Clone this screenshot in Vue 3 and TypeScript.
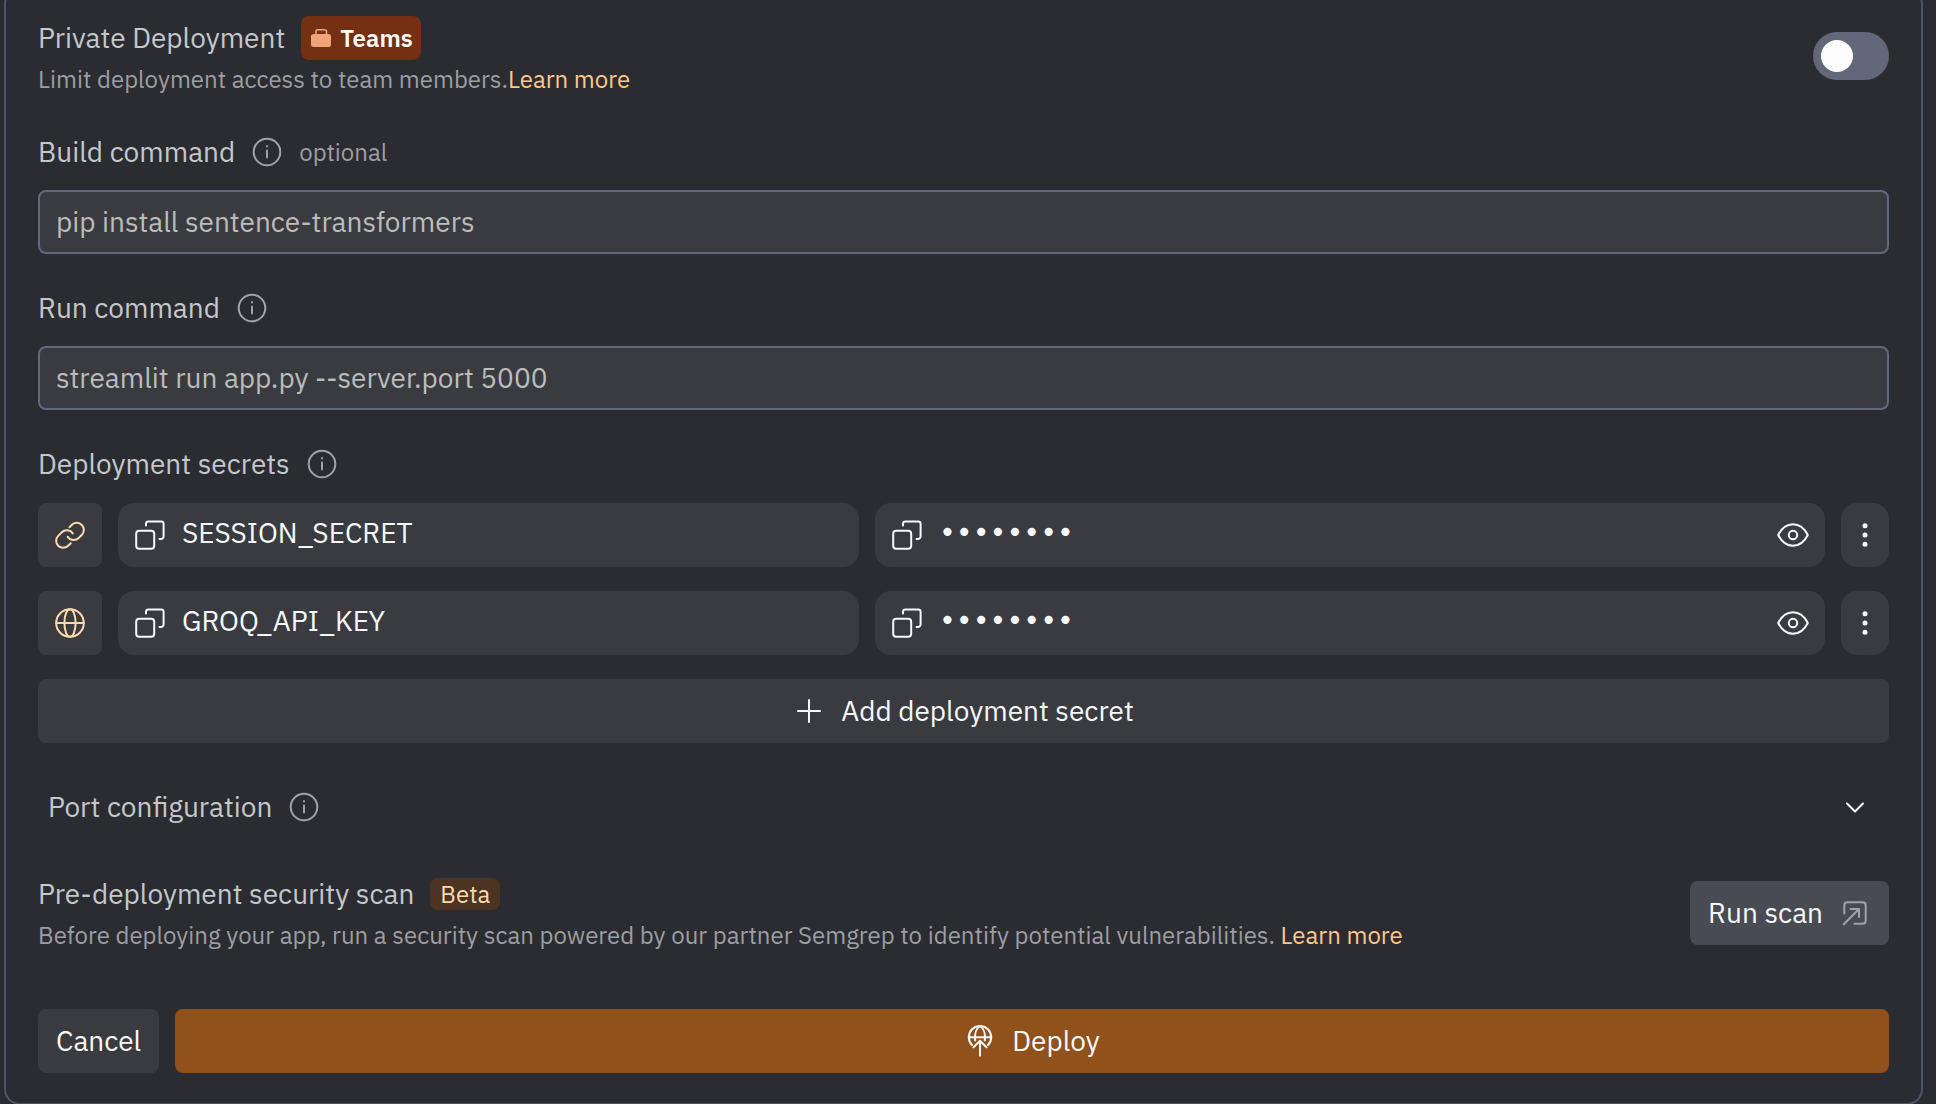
<script setup lang="ts">
import { ref } from 'vue'

interface Secret {
  name: string
  scope: 'linked' | 'global'
}

const privateDeployment = ref(false)
const buildCommand = ref('pip install sentence-transformers')
const runCommand = ref('streamlit run app.py --server.port 5000')
const secrets: Secret[] = [
  { name: 'SESSION_SECRET', scope: 'linked' },
  { name: 'GROQ_API_KEY', scope: 'global' },
]
</script>

<template>
  <main class="page">
    <form class="card" @submit.prevent>
      <section class="row private">
        <div class="about">
          <div class="title">
            <label for="private">Private Deployment</label>
            <span class="badge teams">
              <svg class="icon-bag" viewBox="0 0 20 24" aria-hidden="true">
                <path d="M5 9V5.800a2 2 0 0 1 2-2h6.500a2 2 0 0 1 2 2V9" fill="none" stroke="currentColor" stroke-width="1.600" />
                <rect x="0" y="8" width="20" height="13" rx="2.500" fill="currentColor" />
              </svg>
              Teams
            </span>
          </div>
          <p class="hint">Limit deployment access to team members.<a href="#">Learn more</a></p>
        </div>
        <input id="private" v-model="privateDeployment" class="switch" type="checkbox" role="switch" />
      </section>

      <section class="field">
        <div class="label-row">
          <label for="build">Build command</label>
          <svg class="info" viewBox="0 0 32 32" aria-hidden="true">
            <circle cx="16" cy="16" r="13.300" />
            <path d="M16 14.500v7M16 10v.6" />
          </svg>
          <span class="optional">optional</span>
        </div>
        <input id="build" v-model="buildCommand" class="text-input" type="text" />
      </section>

      <section class="field">
        <div class="label-row">
          <label for="run">Run command</label>
          <svg class="info" viewBox="0 0 32 32" aria-hidden="true">
            <circle cx="16" cy="16" r="13.300" />
            <path d="M16 14.500v7M16 10v.6" />
          </svg>
        </div>
        <input id="run" v-model="runCommand" class="text-input" type="text" />
      </section>

      <section class="field">
        <div class="label-row">
          <h2>Deployment secrets</h2>
          <svg class="info" viewBox="0 0 32 32" aria-hidden="true">
            <circle cx="16" cy="16" r="13.300" />
            <path d="M16 14.500v7M16 10v.6" />
          </svg>
        </div>
        <div class="secrets">
          <div v-for="secret in secrets" :key="secret.name" class="secret">
            <span class="scope">
              <svg v-if="secret.scope === 'linked'" class="icon" viewBox="0 0 32 32" aria-hidden="true">
                <path d="M15.500 8.200l2.700-2.700a7.100 7.100 0 0 1 10 10l-3.500 3.500a7.100 7.100 0 0 1-11-1.100" />
                <path d="M16.800 24.200l-2.700 2.600a7 7 0 0 1-9.900-9.900l3.600-3.600a7.100 7.100 0 0 1 11 1.100" />
              </svg>
              <svg v-else class="icon" viewBox="0 0 32 32" aria-hidden="true">
                <circle cx="16" cy="16" r="13.800" />
                <ellipse cx="16" cy="16" rx="5.600" ry="13.800" />
                <path d="M2.200 16h27.600" />
              </svg>
            </span>
            <div class="cell">
              <button type="button" class="plain" aria-label="Copy name">
                <svg class="icon" viewBox="0 0 32 32" aria-hidden="true">
                  <rect x="2.200" y="11.800" width="18" height="18" rx="3" />
                  <path d="M12 6.500V4.800a2.400 2.400 0 0 1 2.400-2.400h12.800a2.400 2.400 0 0 1 2.400 2.400v12.400a2.800 2.800 0 0 1-2.800 2.800h-1.300" />
                </svg>
              </button>
              <span class="value">{{ secret.name }}</span>
            </div>
            <div class="cell">
              <button type="button" class="plain" aria-label="Copy value">
                <svg class="icon" viewBox="0 0 32 32" aria-hidden="true">
                  <rect x="2.200" y="11.800" width="18" height="18" rx="3" />
                  <path d="M12 6.500V4.800a2.400 2.400 0 0 1 2.400-2.400h12.800a2.400 2.400 0 0 1 2.400 2.400v12.400a2.800 2.800 0 0 1-2.800 2.800h-1.300" />
                </svg>
              </button>
              <span class="value masked">••••••••</span>
              <button type="button" class="plain" aria-label="Show value">
                <svg class="icon" viewBox="0 0 32 32" aria-hidden="true">
                  <path d="M1.200 16C4.600 9.200 9.800 5.200 16 5.200S27.400 9.200 30.800 16C27.400 22.800 22.200 26.800 16 26.800S4.600 22.800 1.200 16z" />
                  <circle cx="16" cy="16" r="4.200" />
                </svg>
              </button>
            </div>
            <button type="button" class="more" aria-label="More actions">
              <svg class="icon" viewBox="0 0 32 32" aria-hidden="true">
                <g fill="currentColor" stroke="none">
                  <circle cx="16" cy="6.700" r="2.500" />
                  <circle cx="16" cy="16" r="2.500" />
                  <circle cx="16" cy="25.300" r="2.500" />
                </g>
              </svg>
            </button>
          </div>
          <button type="button" class="btn add">
            <svg class="icon" viewBox="0 0 32 32" aria-hidden="true"><path d="M16 5v22M5 16h22" /></svg>
            Add deployment secret
          </button>
        </div>
      </section>

      <button type="button" class="port" aria-expanded="false">
        Port configuration
        <svg class="info" viewBox="0 0 32 32" aria-hidden="true">
          <circle cx="16" cy="16" r="13.300" />
          <path d="M16 14.500v7M16 10v.6" />
        </svg>
        <svg class="icon chevron" viewBox="0 0 32 32" aria-hidden="true"><path d="M8 12.500l8 8 8-8" /></svg>
      </button>

      <section class="row scan">
        <div class="about">
          <div class="title">
            <h2>Pre-deployment security scan</h2>
            <span class="badge beta">Beta</span>
          </div>
          <p class="hint">
            Before deploying your app, run a security scan powered by our partner Semgrep to identify potential vulnerabilities.
            <a href="#">Learn more</a>
          </p>
        </div>
        <button type="button" class="btn run">
          Run scan
          <svg class="icon" viewBox="0 0 32 32" aria-hidden="true">
            <path d="M5.300 16.500V8.300a3 3 0 0 1 3-3h15.400a3 3 0 0 1 3 3v15.400a3 3 0 0 1-3 3H15.500" />
            <path d="M4.800 27.200L20 12M11.500 12H20v8" />
          </svg>
        </button>
      </section>

      <footer class="actions">
        <button type="button" class="btn">Cancel</button>
        <button type="submit" class="btn deploy">
          <svg class="icon" viewBox="0 0 32 32" aria-hidden="true">
            <path d="M8 20a11.200 11.200 0 1 1 16 0" />
            <path d="M4.800 12.200h22.400M11.300 15.500c-.9-6 .8-12 4.700-14.500 3.900 2.500 5.600 8.500 4.700 14.500M16 30.800V15.800M9.500 22.300l6.500-6.500 6.500 6.500" />
          </svg>
          Deploy
        </button>
      </footer>
    </form>
  </main>
</template>

<style>
body {
  margin: 0;
  background: #2b2c31;
}
</style>

<style scoped>
.page {
  box-sizing: border-box;
  min-height: 100vh;
  max-height: 100vh;
  padding: 0 13px 0 4px;
  overflow: hidden;
  color: #c2c8cc;
  background: #2b2c31;
  font: 400 28px/40px 'IBM Plex Sans', Roboto, sans-serif;
}

.card {
  margin-top: -12px;
  padding: 26px 32px 30px;
  border: 2px solid #4e5569;
  border-radius: 16px;
}

h2,
p {
  margin: 0;
  font: inherit;
}

button {
  margin: 0;
  border: 0;
  font: inherit;
  cursor: pointer;
}

a {
  color: #ffc78a;
  text-decoration: none;
}

.icon,
.info {
  display: block;
  flex: none;
  width: 32px;
  height: 32px;
  fill: none;
  stroke: currentColor;
  stroke-width: 2;
  stroke-linecap: round;
  stroke-linejoin: round;
}

.info {
  color: #a0a3a8;
}

.row {
  display: flex;
  justify-content: space-between;
  align-items: center;
  gap: 32px;
}

.private {
  padding-bottom: 2px;
}

.title {
  display: flex;
  align-items: center;
  gap: 16px;
}

.hint {
  margin-top: 5px;
  color: #9c9ea3;
  font-size: 24px;
  line-height: 32px;
}

.private .hint {
  margin-top: 3px;
  padding-bottom: 1px;
}

.badge {
  display: flex;
  align-items: center;
  border-radius: 8px;
  font-size: 24px;
  line-height: 32px;
}

.teams {
  gap: 9px;
  padding: 6px 8px 6px 10px;
  color: #fff;
  background: #752f12;
  font-weight: 600;
}

.icon-bag {
  width: 20px;
  height: 24px;
  color: #f0a479;
}

.beta {
  padding: 0 10px;
  color: #ffd9ae;
  background: #4c3322;
}

.switch {
  flex: none;
  width: 76px;
  height: 48px;
  margin: 0;
  padding: 8px;
  border-radius: 24px;
  appearance: none;
  background: #62687a;
  cursor: pointer;
}

.switch::before {
  content: '';
  display: block;
  width: 32px;
  height: 32px;
  border-radius: 50%;
  background: #fdfdfd;
}

.switch:checked::before {
  margin-left: auto;
}

.field {
  padding-top: 34px;
}

.label-row {
  display: flex;
  align-items: center;
  gap: 16px;
  height: 40px;
}

.optional {
  color: #9c9ea3;
  font-size: 24px;
}

.text-input {
  display: block;
  box-sizing: border-box;
  width: 100%;
  height: 64px;
  margin-top: 18px;
  padding: 0 16px 2px;
  border: 2px solid #62687d;
  border-radius: 8px;
  outline: none;
  color: #bcbcbb;
  background: #3a3b40;
  font: inherit;
}

.secrets {
  display: grid;
  gap: 24px;
  margin-top: 19px;
}

.secret {
  display: grid;
  grid-template-columns: 64px 39fr 50fr 48px;
  gap: 16px;
  height: 64px;
}

.scope {
  display: flex;
  align-items: center;
  justify-content: center;
  border-radius: 8px;
  color: #ffd9ae;
  background: #3a3b40;
}

.cell {
  display: flex;
  align-items: center;
  gap: 16px;
  padding: 0 16px;
  border-radius: 16px;
  color: #f5f9fc;
  background: #3a3b40;
}

.value {
  flex: 1;
  padding-bottom: 4px;
}

.masked {
  font-family: 'DejaVu Sans Mono', monospace;
}

.plain {
  padding: 0;
  color: inherit;
  background: none;
}

.more {
  display: flex;
  align-items: center;
  justify-content: center;
  padding: 0;
  border-radius: 16px;
  color: #f5f9fc;
  background: #3a3b40;
}

.btn {
  display: flex;
  align-items: center;
  justify-content: center;
  gap: 16px;
  height: 64px;
  padding: 0 18px;
  border-radius: 8px;
  color: #f5f9fc;
  background: #3a3b40;
  white-space: nowrap;
}

.port {
  display: flex;
  align-items: center;
  gap: 16px;
  width: 100%;
  height: 64px;
  margin-top: 32px;
  padding: 0 18px 0 10px;
  color: inherit;
  background: none;
}

.chevron {
  margin-left: auto;
  color: #f5f9fc;
}

.scan {
  margin-top: 35px;
}

.run {
  background: #484b51;
}

.run .icon {
  color: #a0a3a8;
}

.actions {
  display: flex;
  gap: 16px;
  margin-top: 58px;
}

.deploy {
  flex: 1;
  background: #90511b;
}
</style>
